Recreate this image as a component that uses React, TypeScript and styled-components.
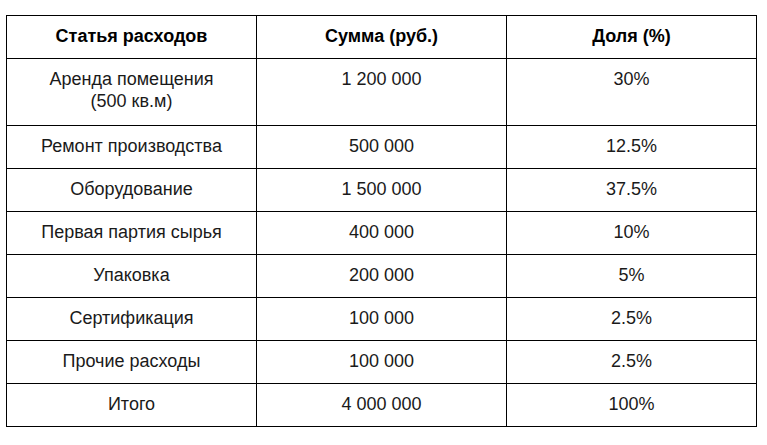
import React from 'react'
import styled, { createGlobalStyle } from 'styled-components'

const GlobalStyle = createGlobalStyle`
  html, body {
    margin: 0;
    padding: 0;
    background: #fff;
  }
  body {
    font-family: 'Liberation Sans', Arial, sans-serif;
    color: #1a1a1a;
  }
`

const Page = styled.div`
  padding: 15px 0 0 6px;
`

const Table = styled.table`
  border-collapse: collapse;
  table-layout: fixed;
  width: 751px;
  font-size: 18px;
  line-height: 22px;
`

const HeadCell = styled.th`
  border: 1px solid #000;
  padding: 9px 10px 11px;
  font-weight: bold;
  text-align: center;
  vertical-align: top;
  color: #000;
`

const Row = styled.tr<{ $height?: number }>`
  height: ${p => (p.$height ? `${p.$height}px` : 'auto')};
`

const Cell = styled.td`
  border: 1px solid #000;
  padding: 9px 10px 11px;
  text-align: center;
  vertical-align: top;
`

const rows: { item: React.ReactNode; sum: string; share: string; height?: number }[] = [
  { item: <>Аренда помещения<br />(500 кв.м)</>, sum: '1 200 000', share: '30%', height: 67 },
  { item: 'Ремонт производства', sum: '500 000', share: '12.5%' },
  { item: 'Оборудование', sum: '1 500 000', share: '37.5%' },
  { item: 'Первая партия сырья', sum: '400 000', share: '10%' },
  { item: 'Упаковка', sum: '200 000', share: '5%' },
  { item: 'Сертификация', sum: '100 000', share: '2.5%' },
  { item: 'Прочие расходы', sum: '100 000', share: '2.5%' },
  { item: 'Итого', sum: '4 000 000', share: '100%' },
]

export default function App() {
  return (
    <>
      <GlobalStyle />
      <Page>
        <Table>
          <colgroup>
            <col style={{ width: 250 }} />
            <col style={{ width: 250 }} />
            <col style={{ width: 250 }} />
          </colgroup>
          <thead>
            <tr>
              <HeadCell>Статья расходов</HeadCell>
              <HeadCell>Сумма (руб.)</HeadCell>
              <HeadCell>Доля (%)</HeadCell>
            </tr>
          </thead>
          <tbody>
            {rows.map((r, i) => (
              <Row key={i} $height={r.height}>
                <Cell>{r.item}</Cell>
                <Cell>{r.sum}</Cell>
                <Cell>{r.share}</Cell>
              </Row>
            ))}
          </tbody>
        </Table>
      </Page>
    </>
  )
}
